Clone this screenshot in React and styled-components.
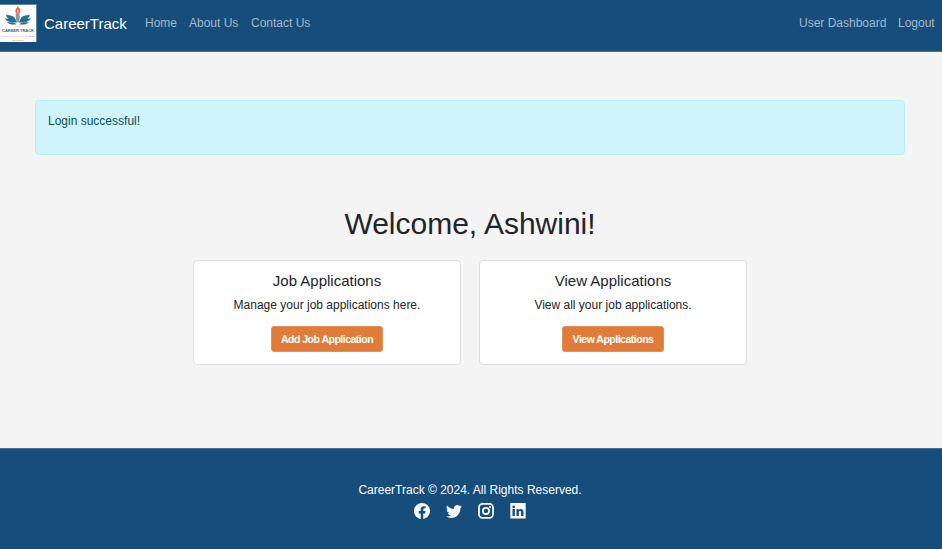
import React from "react";
import styled, { createGlobalStyle } from "styled-components";
import { BsFacebook, BsTwitter } from "react-icons/bs";

const GlobalStyle = createGlobalStyle`
  *, *::before, *::after { box-sizing: border-box; }
  body {
    margin: 0;
    background: #f4f4f4;
    color: #212529;
    font: 400 12px/18px "Liberation Sans", Arial, sans-serif;
  }
  h1, h2, p { margin: 0; font-weight: 400; }
  a { color: inherit; text-decoration: none; }
`;

const Page = styled.div`
  height: 549px;
  display: flex;
  flex-direction: column;
  overflow: hidden;
`;

const Navbar = styled.nav`
  height: 52px;
  flex: none;
  display: flex;
  align-items: flex-start;
  justify-content: space-between;
  background: #174d7a;
  border-bottom: 1px solid #457196;
`;

const NavGroup = styled.div`
  display: flex;
  gap: 12px;
  padding-top: ${(p) => p.$top || 0}px;
  padding-right: ${(p) => p.$right || 0}px;
`;

const NavStart = styled.div`
  display: flex;
`;

const Logo = styled.svg`
  display: block;
  width: 37px;
  height: 38px;
  margin-top: 4px;
`;

const Brand = styled.a`
  width: 108px;
  padding: 12px 0 0 7px;
  color: #fff;
  font-size: 15px;
  line-height: 23px;
  white-space: nowrap;
`;

const NavLink = styled.a`
  width: ${(p) => p.$w}px;
  color: #a2b8ca;
  white-space: nowrap;
`;

const Main = styled.main`
  flex: 1;
  padding: 48px 37px 0 35px;
`;

const Alert = styled.div`
  height: 55px;
  padding: 11px 12px;
  color: #055160;
  background: #cff4fc;
  border: 1px solid #b6effb;
  border-radius: 4px;
`;

const Welcome = styled.h1`
  margin-top: 51px;
  font-size: 30px;
  line-height: 36px;
  text-align: center;
`;

const Cards = styled.div`
  display: flex;
  justify-content: center;
  gap: 18px;
  margin-top: 18px;
`;

const Card = styled.section`
  width: 268px;
  height: 105px;
  padding: 11px 12px;
  display: flex;
  flex-direction: column;
  align-items: center;
  background: #fff;
  border: 1px solid #dfdfdf;
  border-radius: 4px;
`;

const CardTitle = styled.h2`
  font-size: 15px;
  line-height: 18px;
`;

const CardText = styled.p`
  margin-top: 6px;
`;

const Button = styled.a`
  width: ${(p) => p.$w}px;
  height: 26px;
  margin-top: 12px;
  display: flex;
  align-items: center;
  justify-content: center;
  color: #fff;
  background: #e07b39;
  border: 1px solid #e58f58;
  border-radius: 3px;
  font-size: 10.5px;
  font-weight: 700;
  letter-spacing: -0.5px;
  white-space: nowrap;
`;

const Footer = styled.footer`
  height: 101px;
  flex: none;
  display: flex;
  flex-direction: column;
  align-items: center;
  padding: 32px 2px 0 0;
  color: #fff;
  background: #174d7a;
  border-top: 1px solid #457196;
`;

const Socials = styled.div`
  display: flex;
  gap: 16px;
  margin-top: 4px;
  color: #f8f9fa;
  font-size: 16px;
`;

const LogoMark = () => (
  <Logo viewBox="0 0 37 38" aria-label="Career Track">
    <path fill="#5f86a5" d="M0 0h37v38H0z" />
    <path fill="#fff" d="M0 1h36v37H0z" />
    <path fill="#ed6335" d="M17.8 1.8c.2 2 3 2.8 2.5 5.3-.2 1.4-1.4 2.3-2.4 2.3-1.5 0-2.900-1.300-2.600-3 .2-1.600 2.100-2.200 2.500-4.600z" />
    <path fill="#fff" d="M17.8 5.400c1 1.100 1 2.600 0 3.200-1-.7-1-2.100 0-3.200z" />
    <path fill="#8b989f" d="M15.700 9.200h4.200l-.6 9h-3z" />
    <g fill="#28708a">
      <path d="M6 10.500c4 1.500 8.500.5 9.800 5.500l.9 3.500c-3-3.500-8.500-3-10.200-7zM4.700 14.300c3.800.8 8.300.2 11.300 4.300-3 0-9.300-.2-11.300-4.300zM6.700 18.300c3.300.2 7-.2 10.200 2-3 .5-7.900.6-10.200-2z" />
      <path d="M29.800 10.500c-4 1.500-8.500.5-9.800 5.500l-.9 3.500c3-3.500 8.500-3 10.200-7zM31.100 14.300c-3.800.8-8.300.2-11.300 4.300 3 0 9.300-.2 11.300-4.300zM29.100 18.300c-3.300.2-7-.2-10.200 2 3 .5 7.900.6 10.200-2z" />
    </g>
    <g textAnchor="middle" fontFamily="Liberation Sans, Arial, sans-serif">
      <text x="18" y="23" fontSize="2.500" fill="#e78561" textLength="5">THE</text>
      <text x="18" y="27.600" fontSize="4" fontWeight="700" fill="#276a80" textLength="32">CAREER TRACK</text>
      <text x="18" y="32.600" fontSize="2.300" fill="#e9785c" textLength="34">YOUR PATHWAY TO CAREER</text>
      <text x="18" y="36.800" fontSize="2.300" fill="#e9785c" textLength="11">SUCCESS</text>
    </g>
  </Logo>
);

const InstagramMark = () => (
  <svg width="16" height="16" viewBox="0 0 16 16" fill="none" stroke="currentColor" strokeWidth="1.800" aria-label="Instagram">
    <rect x="1" y=".9" width="14" height="14" rx="3.600" />
    <circle cx="8" cy="7.900" r="3.100" />
    <circle cx="12" cy="3.900" r="1" fill="currentColor" stroke="none" />
  </svg>
);

const LinkedInMark = () => (
  <svg width="16" height="16" viewBox="0 0 16 16" fill="currentColor" aria-label="LinkedIn">
    <path fillRule="evenodd" d="M.3 0h15.400v15.400H.3zM2.500 6v7h2.400V6zM3.700 2.400a1.350 1.350 0 1 0 0 2.700 1.350 1.350 0 0 0 0-2.700M6.500 6v7h2.400V9.500c0-1.900 2.200-1.900 2.200 0V13h2.400V8.900c0-3.300-3.500-3.600-4.700-1.900V6z" />
  </svg>
);

export default function App() {
  return (
    <Page>
      <GlobalStyle />
      <Navbar>
        <NavStart>
          <LogoMark />
          <Brand href="#">CareerTrack</Brand>
          <NavGroup $top={14}>
            <NavLink href="#" $w={32}>Home</NavLink>
            <NavLink href="#" $w={50}>About Us</NavLink>
            <NavLink href="#" $w={60}>Contact Us</NavLink>
          </NavGroup>
        </NavStart>
        <NavGroup $top={14} $right={6}>
          <NavLink href="#" $w={87}>User Dashboard</NavLink>
          <NavLink href="#" $w={38}>Logout</NavLink>
        </NavGroup>
      </Navbar>
      <Main>
        <Alert role="alert">Login successful!</Alert>
        <Welcome>Welcome, Ashwini!</Welcome>
        <Cards>
          <Card>
            <CardTitle>Job Applications</CardTitle>
            <CardText>Manage your job applications here.</CardText>
            <Button href="#" $w={112}>Add Job Application</Button>
          </Card>
          <Card>
            <CardTitle>View Applications</CardTitle>
            <CardText>View all your job applications.</CardText>
            <Button href="#" $w={102}>View Applications</Button>
          </Card>
        </Cards>
      </Main>
      <Footer>
        <p>CareerTrack © 2024. All Rights Reserved.</p>
        <Socials>
          <BsFacebook />
          <BsTwitter />
          <InstagramMark />
          <LinkedInMark />
        </Socials>
      </Footer>
    </Page>
  );
}
